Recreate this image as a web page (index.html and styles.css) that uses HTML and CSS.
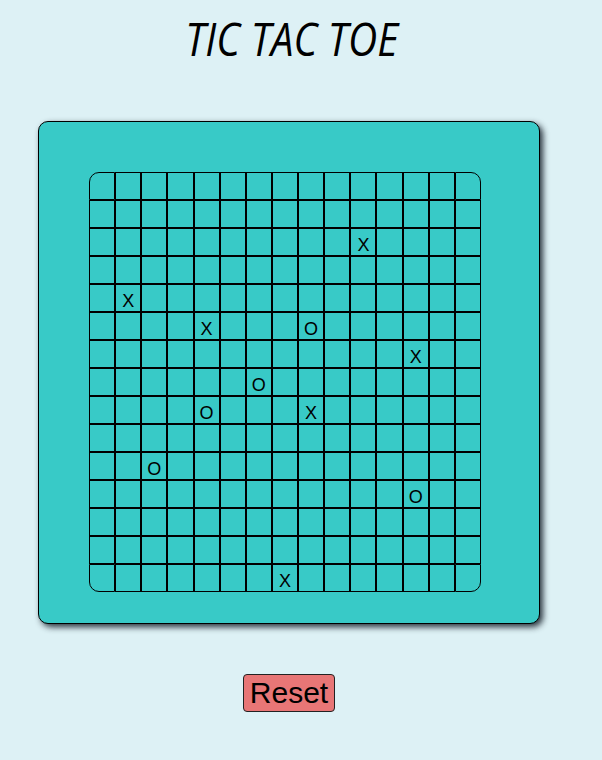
FILE: index.html
```html
<!DOCTYPE html>
<html lang="en">
<head>
<meta charset="utf-8">
<title>Tic Tac Toe</title>
<link rel="stylesheet" href="styles.css">
</head>
<body>
<div class="app">
  <h1 class="title">TIC TAC TOE</h1>
  <div class="board">
    <div class="grid">
      <div class="cell"></div><div class="cell"></div><div class="cell"></div><div class="cell"></div><div class="cell"></div><div class="cell"></div><div class="cell"></div><div class="cell"></div><div class="cell"></div><div class="cell"></div><div class="cell"></div><div class="cell"></div><div class="cell"></div><div class="cell"></div><div class="cell"></div>
      <div class="cell"></div><div class="cell"></div><div class="cell"></div><div class="cell"></div><div class="cell"></div><div class="cell"></div><div class="cell"></div><div class="cell"></div><div class="cell"></div><div class="cell"></div><div class="cell"></div><div class="cell"></div><div class="cell"></div><div class="cell"></div><div class="cell"></div>
      <div class="cell"></div><div class="cell"></div><div class="cell"></div><div class="cell"></div><div class="cell"></div><div class="cell"></div><div class="cell"></div><div class="cell"></div><div class="cell"></div><div class="cell"></div><div class="cell">X</div><div class="cell"></div><div class="cell"></div><div class="cell"></div><div class="cell"></div>
      <div class="cell"></div><div class="cell"></div><div class="cell"></div><div class="cell"></div><div class="cell"></div><div class="cell"></div><div class="cell"></div><div class="cell"></div><div class="cell"></div><div class="cell"></div><div class="cell"></div><div class="cell"></div><div class="cell"></div><div class="cell"></div><div class="cell"></div>
      <div class="cell"></div><div class="cell">X</div><div class="cell"></div><div class="cell"></div><div class="cell"></div><div class="cell"></div><div class="cell"></div><div class="cell"></div><div class="cell"></div><div class="cell"></div><div class="cell"></div><div class="cell"></div><div class="cell"></div><div class="cell"></div><div class="cell"></div>
      <div class="cell"></div><div class="cell"></div><div class="cell"></div><div class="cell"></div><div class="cell">X</div><div class="cell"></div><div class="cell"></div><div class="cell"></div><div class="cell">O</div><div class="cell"></div><div class="cell"></div><div class="cell"></div><div class="cell"></div><div class="cell"></div><div class="cell"></div>
      <div class="cell"></div><div class="cell"></div><div class="cell"></div><div class="cell"></div><div class="cell"></div><div class="cell"></div><div class="cell"></div><div class="cell"></div><div class="cell"></div><div class="cell"></div><div class="cell"></div><div class="cell"></div><div class="cell">X</div><div class="cell"></div><div class="cell"></div>
      <div class="cell"></div><div class="cell"></div><div class="cell"></div><div class="cell"></div><div class="cell"></div><div class="cell"></div><div class="cell">O</div><div class="cell"></div><div class="cell"></div><div class="cell"></div><div class="cell"></div><div class="cell"></div><div class="cell"></div><div class="cell"></div><div class="cell"></div>
      <div class="cell"></div><div class="cell"></div><div class="cell"></div><div class="cell"></div><div class="cell">O</div><div class="cell"></div><div class="cell"></div><div class="cell"></div><div class="cell">X</div><div class="cell"></div><div class="cell"></div><div class="cell"></div><div class="cell"></div><div class="cell"></div><div class="cell"></div>
      <div class="cell"></div><div class="cell"></div><div class="cell"></div><div class="cell"></div><div class="cell"></div><div class="cell"></div><div class="cell"></div><div class="cell"></div><div class="cell"></div><div class="cell"></div><div class="cell"></div><div class="cell"></div><div class="cell"></div><div class="cell"></div><div class="cell"></div>
      <div class="cell"></div><div class="cell"></div><div class="cell">O</div><div class="cell"></div><div class="cell"></div><div class="cell"></div><div class="cell"></div><div class="cell"></div><div class="cell"></div><div class="cell"></div><div class="cell"></div><div class="cell"></div><div class="cell"></div><div class="cell"></div><div class="cell"></div>
      <div class="cell"></div><div class="cell"></div><div class="cell"></div><div class="cell"></div><div class="cell"></div><div class="cell"></div><div class="cell"></div><div class="cell"></div><div class="cell"></div><div class="cell"></div><div class="cell"></div><div class="cell"></div><div class="cell">O</div><div class="cell"></div><div class="cell"></div>
      <div class="cell"></div><div class="cell"></div><div class="cell"></div><div class="cell"></div><div class="cell"></div><div class="cell"></div><div class="cell"></div><div class="cell"></div><div class="cell"></div><div class="cell"></div><div class="cell"></div><div class="cell"></div><div class="cell"></div><div class="cell"></div><div class="cell"></div>
      <div class="cell"></div><div class="cell"></div><div class="cell"></div><div class="cell"></div><div class="cell"></div><div class="cell"></div><div class="cell"></div><div class="cell"></div><div class="cell"></div><div class="cell"></div><div class="cell"></div><div class="cell"></div><div class="cell"></div><div class="cell"></div><div class="cell"></div>
      <div class="cell"></div><div class="cell"></div><div class="cell"></div><div class="cell"></div><div class="cell"></div><div class="cell"></div><div class="cell"></div><div class="cell">X</div><div class="cell"></div><div class="cell"></div><div class="cell"></div><div class="cell"></div><div class="cell"></div><div class="cell"></div><div class="cell"></div>
    </div>
  </div>
  <button class="reset" type="button">Reset</button>
</div>
</body>
</html>
```

FILE: styles.css
```css
html, body {
  margin: 0;
  padding: 0;
  background: #ddf1f5;
}

.app {
  width: 578px;
  display: flex;
  flex-direction: column;
  align-items: center;
}

.title {
  margin: 7px 0 0;
  font-family: "Open Sans", "Noto Sans", sans-serif;
  font-style: italic;
  font-weight: 400;
  font-size: 46px;
  line-height: normal;
  color: #000;
  padding-left: 6px;
  transform: scaleX(0.88);
}

.board {
  box-sizing: border-box;
  width: 502px;
  height: 503px;
  margin-top: 52px;
  padding: 50px 58px 30px 50px;
  background: #38cac7;
  border: 1px solid #000;
  border-radius: 10px;
  box-shadow: 3px 3px 6px rgba(20, 30, 40, 0.9);
}

.grid {
  width: 392px;
  height: 420px;
  display: grid;
  grid-template-columns: repeat(15, 1fr);
  grid-template-rows: repeat(15, 28px);
}

.cell {
  box-sizing: border-box;
  border: 1px solid #000;
  display: flex;
  align-items: center;
  justify-content: center;
  padding-top: 7px;
  font-family: "Liberation Sans", Arial, sans-serif;
  font-size: 18px;
  color: #000;
}

.cell:nth-child(1) { border-top-left-radius: 10px; }
.cell:nth-child(15) { border-top-right-radius: 10px; }
.cell:nth-child(211) { border-bottom-left-radius: 10px; }
.cell:nth-child(225) { border-bottom-right-radius: 10px; }

.reset {
  margin-top: 50px;
  width: 92px;
  height: 38px;
  padding: 0;
  background: #e87676;
  border: 1px solid #222;
  border-radius: 4px;
  font-family: "Liberation Sans", Arial, sans-serif;
  font-size: 30px;
  color: #000;
  line-height: 1;
}
```
